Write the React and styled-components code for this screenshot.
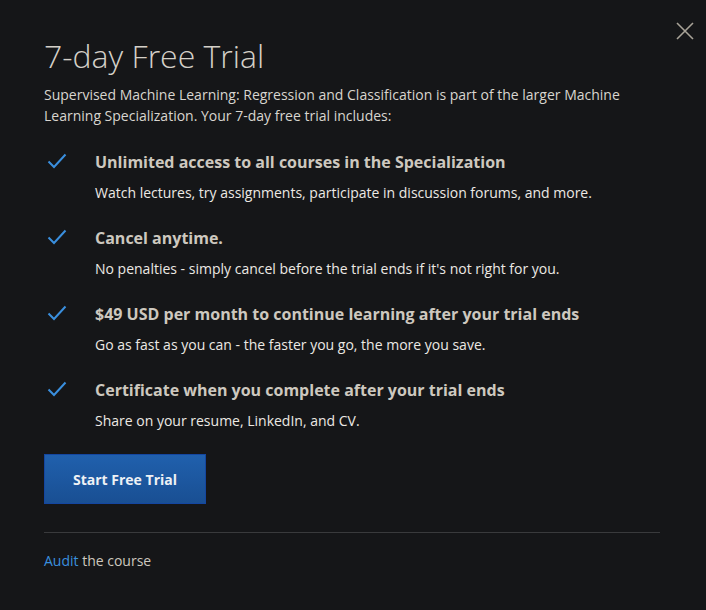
import styled, { createGlobalStyle } from 'styled-components';

const GlobalStyle = createGlobalStyle`
  html, body {
    margin: 0;
    padding: 0;
    background: #151618;
  }
  body {
    font-family: "Open Sans", "Liberation Sans", sans-serif;
  }
`;

const Dialog = styled.div`
  position: relative;
  width: 706px;
  height: 610px;
  box-sizing: border-box;
  padding: 36px 46px 0 44px;
  background: #151618;
  color: #e6e3de;
`;

const CloseButton = styled.button`
  position: absolute;
  top: 20px;
  right: 10px;
  width: 22px;
  height: 22px;
  padding: 0;
  border: none;
  background: none;
  cursor: pointer;
`;

const Title = styled.h1`
  margin: 0;
  font-size: 32px;
  font-weight: 300;
  line-height: 40px;
  color: #d4d0c8;
`;

const Intro = styled.p`
  margin: 8px 0 0;
  font-size: 14px;
  line-height: 21px;
  color: #d8d5cf;
`;

const List = styled.ul`
  list-style: none;
  margin: 25px 0 0;
  padding: 0;
  display: flex;
  flex-direction: column;
  gap: 24px;
`;

const Item = styled.li`
  display: grid;
  grid-template-columns: 51px 1fr;
  row-gap: 10px;
`;

const Check = styled.svg`
  grid-row: 1 / span 2;
  margin: 2px 0 0 3px;
`;

const ItemTitle = styled.div`
  font-size: 16px;
  font-weight: 700;
  line-height: 22px;
  color: #cdc8bf;
`;

const ItemText = styled.div`
  font-size: 14px;
  line-height: 20px;
  color: #ece9e4;
`;

const StartButton = styled.button`
  margin-top: 23px;
  width: 162px;
  height: 50px;
  border: 1px solid #1446a0;
  background: linear-gradient(#2060ad, #194f93);
  color: #eef1f5;
  font-family: inherit;
  font-size: 14px;
  font-weight: 700;
  cursor: pointer;
`;

const Divider = styled.hr`
  margin: 28px 0 0;
  border: none;
  border-top: 1px solid #393a3c;
`;

const Footer = styled.p`
  margin: 18px 0 0;
  font-size: 14px;
  line-height: 20px;
  color: #cdc8bf;
`;

const Link = styled.a`
  color: #3a8fde;
  text-decoration: none;
`;

const items = [
  {
    title: 'Unlimited access to all courses in the Specialization',
    text: 'Watch lectures, try assignments, participate in discussion forums, and more.',
  },
  {
    title: 'Cancel anytime.',
    text: "No penalties - simply cancel before the trial ends if it's not right for you.",
  },
  {
    title: '$49 USD per month to continue learning after your trial ends',
    text: 'Go as fast as you can - the faster you go, the more you save.',
  },
  {
    title: 'Certificate when you complete after your trial ends',
    text: 'Share on your resume, LinkedIn, and CV.',
  },
];

export default function App() {
  return (
    <>
      <GlobalStyle />
      <Dialog>
        <CloseButton aria-label="Close">
          <svg width="22" height="22" viewBox="0 0 22 22">
            <path d="M3 3L19 19M19 3L3 19" stroke="#a8a398" strokeWidth="1.6" fill="none" />
          </svg>
        </CloseButton>
        <Title>7-day Free Trial</Title>
        <Intro>
          Supervised Machine Learning: Regression and Classification is part of the larger Machine
          Learning Specialization. Your 7-day free trial includes:
        </Intro>
        <List>
          {items.map((item) => (
            <Item key={item.title}>
              <Check width="20" height="16" viewBox="0 0 20 16">
                <path d="M1.5 8.5L7 14L18.5 1.5" stroke="#3a8fde" strokeWidth="2" fill="none" />
              </Check>
              <ItemTitle>{item.title}</ItemTitle>
              <ItemText>{item.text}</ItemText>
            </Item>
          ))}
        </List>
        <StartButton>Start Free Trial</StartButton>
        <Divider />
        <Footer>
          <Link href="#">Audit</Link> the course
        </Footer>
      </Dialog>
    </>
  );
}
